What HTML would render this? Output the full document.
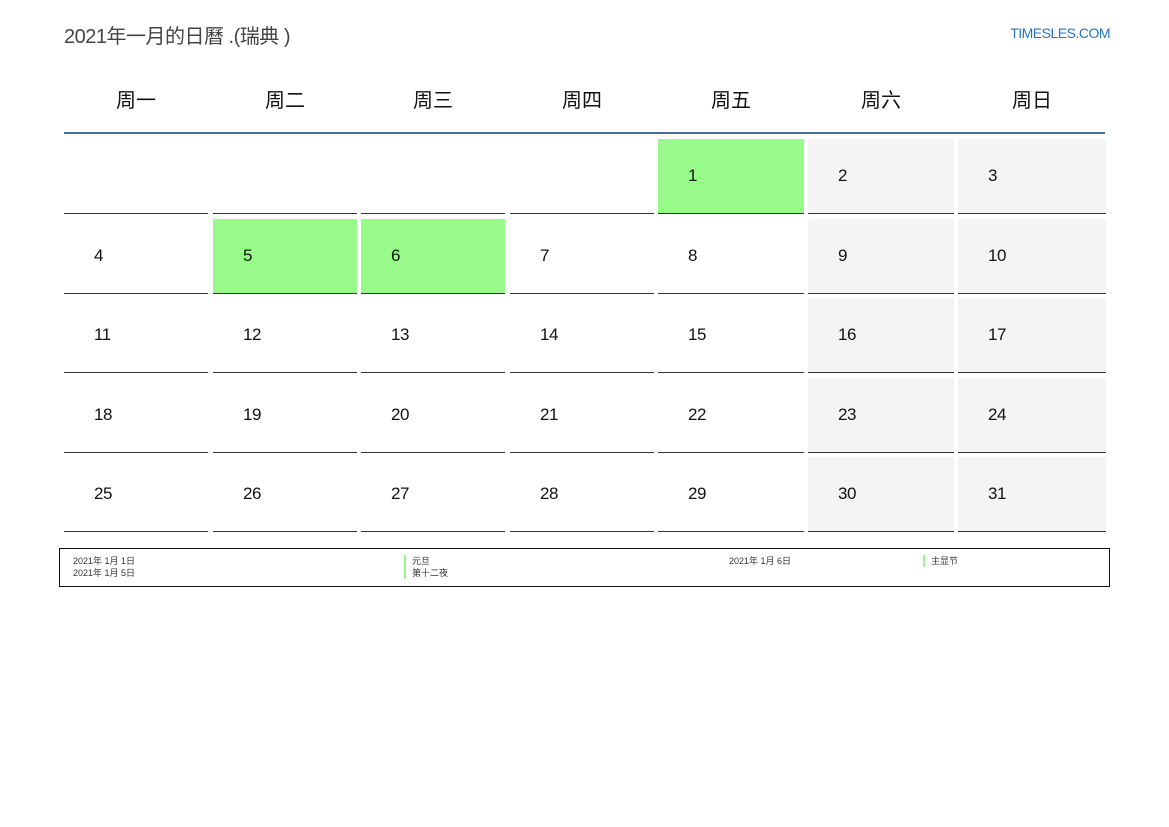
<!DOCTYPE html>
<html><head><meta charset="utf-8"><style>
body{margin:0;width:1169px;height:827px;background:#fff;font-family:"Liberation Sans","Noto Sans CJK SC",sans-serif;position:relative;overflow:hidden}
.a{position:absolute}
.t{left:64px;top:20px;font-size:20px;color:#444;letter-spacing:-0.5px}
.l{right:59px;top:25px;font-size:14px;color:#2a72c0;letter-spacing:-0.5px}
.h{top:84px;width:144px;text-align:center;font-size:20px;color:#111}
.c{width:144px;height:75px;border-bottom:1px solid #333;box-sizing:border-box}
.c span{position:absolute;left:30px;top:27px;font-size:17px;color:#111;letter-spacing:-0.5px}
.g{background:#98fb89}.w{background:#f4f4f4}
.leg{left:59px;top:548px;width:1049px;height:37px;border:1px solid #111;font-size:9px;color:#333}
.leg div{position:absolute;line-height:12px}
.bar{border-left:2px solid #98fb89;padding-left:6px}
</style></head><body>
<div class="a t">2021年一月的日曆 .(瑞典 )</div>
<div class="a l">TIMESLES.COM</div>
<div class="a" style="left:64px;top:132px;width:1041px;height:2px;background:#4a6b9a"></div>
<div id="g"></div>
<div class="a leg">
<div style="left:13px;top:6px">2021年 1月 1日<br>2021年 1月 5日</div>
<div class="bar" style="left:344px;top:6px">元旦<br>第十二夜</div>
<div style="left:669px;top:6px">2021年 1月 6日</div>
<div class="bar" style="left:863px;top:6px">主显节</div>
</div>
<script>
var xs=[64,213,361,510,658,808,958],ws=[144,144,144,144,146,146,148],ys=[139,219,298,378,457];
var hn=["周一","周二","周三","周四","周五","周六","周日"],h="";
for(var i=0;i<7;i++)h+='<div class="a h" style="left:'+xs[i]+'px;width:'+ws[i]+'px">'+hn[i]+'</div>';
for(var r=0;r<5;r++)for(var c=0;c<7;c++){var d=r*7+c-3;var cls="a c";
if(c>=5)cls+=" w";if(d==1||d==5||d==6)cls+=" g";
h+='<div class="'+cls+'" style="left:'+xs[c]+'px;top:'+ys[r]+'px;width:'+ws[c]+'px">'+(d>=1&&d<=31?'<span>'+d+'</span>':'')+'</div>';}
document.getElementById("g").innerHTML=h;
</script>
</body></html>
